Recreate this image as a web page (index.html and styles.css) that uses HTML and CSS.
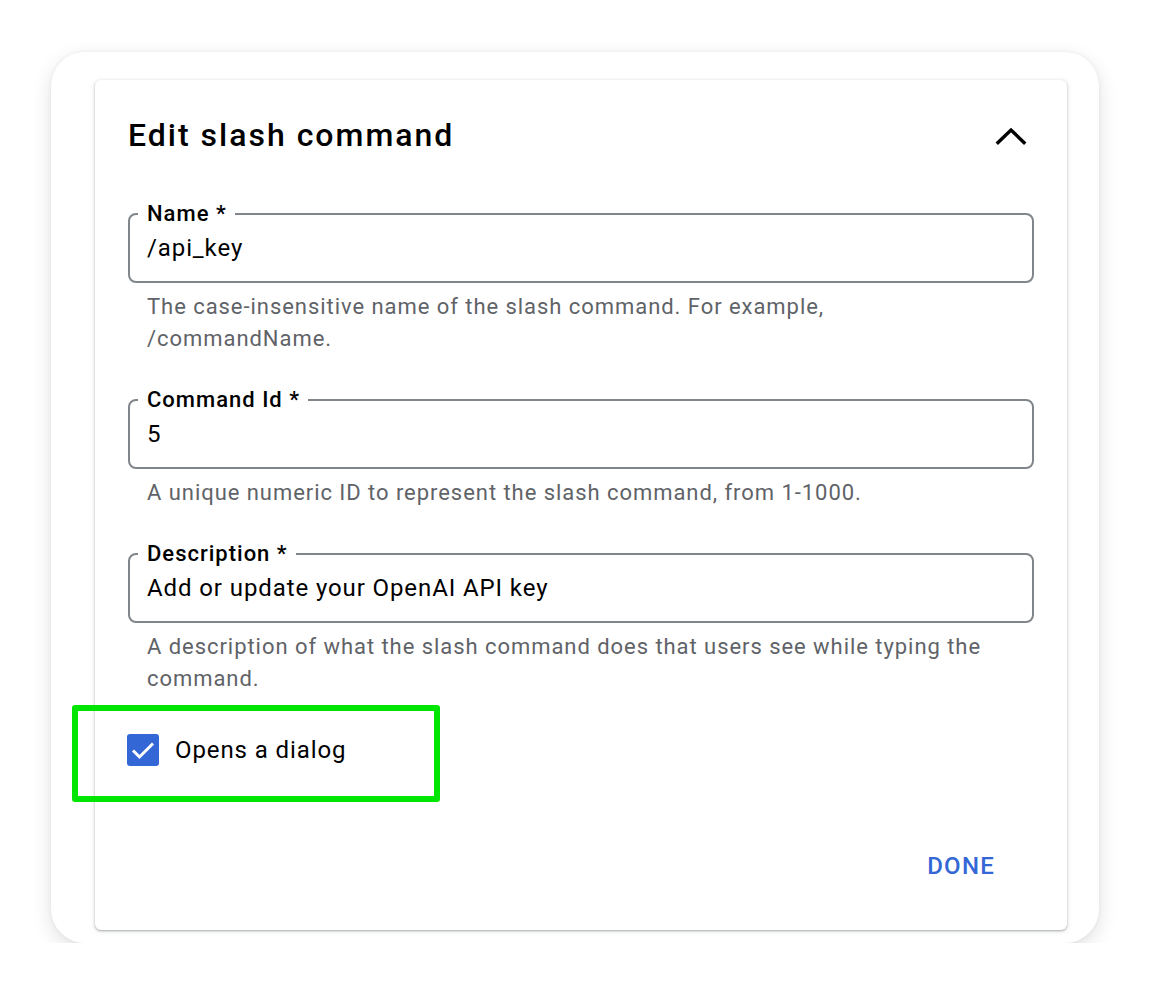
FILE: index.html
```html
<!DOCTYPE html>
<html lang="en">
<head>
<meta charset="utf-8">
<title>Edit slash command</title>
<link rel="stylesheet" href="styles.css">
</head>
<body>
<div class="frame">
  <div class="card">
    <div class="header">
      <h1 class="title">Edit slash command</h1>
      <svg class="chevron" width="32" height="20" viewBox="0 0 32 20" aria-hidden="true">
        <polyline points="3,15.5 16,3 29,15.5" fill="none" stroke="#000" stroke-width="3.4" stroke-linecap="square" stroke-linejoin="miter"/>
      </svg>
    </div>

    <div class="group group-first">
      <div class="field">
        <span class="label">Name *</span>
        <span class="value">/api_key</span>
      </div>
      <p class="helper">The case-insensitive name of the slash command. For example, /commandName.</p>
    </div>

    <div class="group">
      <div class="field">
        <span class="label">Command Id *</span>
        <span class="value">5</span>
      </div>
      <p class="helper">A unique numeric ID to represent the slash command, from 1-1000.</p>
    </div>

    <div class="group">
      <div class="field">
        <span class="label">Description *</span>
        <span class="value">Add or update your OpenAI API key</span>
      </div>
      <p class="helper">A description of what the slash command does that users see while typing the command.</p>
    </div>

    <div class="check-row">
      <span class="checkbox">
        <svg width="32" height="32" viewBox="0 0 32 32" aria-hidden="true">
          <polyline points="6,16.5 12.5,23 26,9.5" fill="none" stroke="#fff" stroke-width="3"/>
        </svg>
      </span>
      <span class="check-label">Opens a dialog</span>
      <span class="highlight"></span>
    </div>

    <div class="footer">
      <button class="done">DONE</button>
    </div>
  </div>
</div>
</body>
</html>
```

FILE: styles.css
```css
html, body {
  margin: 0;
  padding: 0;
  background: #ffffff;
}

body {
  font-family: Roboto, "Noto Sans", "Liberation Sans", sans-serif;
  color: #000;
  overflow: hidden;
}

.frame {
  margin: 52px 0 0 51px;
  width: 1048px;
  height: 891px;
  border-radius: 34px;
  background: #fff;
  box-shadow: 0 6px 20px rgba(0, 0, 0, 0.12), 0 0 4px rgba(0, 0, 0, 0.06);
  padding: 28px 0 0 44px;
  box-sizing: border-box;
}

.card {
  width: 972px;
  height: 850px;
  border-radius: 6px;
  background: #fff;
  box-shadow: 0 1px 2px rgba(60, 64, 67, 0.35), 0 1px 4px 1px rgba(60, 64, 67, 0.12);
  padding: 35px 33px 40px 33px;
  box-sizing: border-box;
  display: flex;
  flex-direction: column;
}

.header {
  display: flex;
  align-items: center;
  justify-content: space-between;
  height: 40px;
}

.title {
  margin: 0;
  font-size: 32px;
  line-height: 40px;
  font-weight: 500;
  letter-spacing: 2px;
  color: #000;
}

.chevron {
  margin-right: 7px;
  margin-top: 4px;
  display: block;
}

.group {
  margin-top: 44px;
}

.group-first {
  margin-top: 58px;
}

.field {
  position: relative;
  height: 70px;
  border: 2px solid #80868b;
  border-radius: 8px;
  box-sizing: border-box;
  display: flex;
  align-items: center;
  padding: 0 17px;
}

.label {
  position: absolute;
  left: 8px;
  top: -14px;
  padding: 0 8px 0 9px;
  background: #fff;
  font-size: 22px;
  line-height: 26px;
  font-weight: 500;
  letter-spacing: 1px;
  color: #000;
}

.value {
  font-size: 24px;
  line-height: 30px;
  letter-spacing: 0.9px;
  color: #000;
}

.helper {
  margin: 8px 0 0 0;
  padding: 0 19px;
  font-size: 22px;
  line-height: 32px;
  letter-spacing: 0.95px;
  color: #5f6368;
}

.check-row {
  position: relative;
  margin-top: 39px;
  display: flex;
  align-items: center;
  height: 32px;
}

.checkbox {
  width: 32px;
  height: 32px;
  margin-left: -1px;
  border-radius: 3px;
  background: #3367d6;
  display: block;
}

.checkbox svg {
  display: block;
}

.check-label {
  margin-left: 16px;
  font-size: 24px;
  line-height: 32px;
  letter-spacing: 0.9px;
  color: #000;
}

.highlight {
  position: absolute;
  left: -56px;
  top: -29px;
  width: 368px;
  height: 97px;
  border: 6px solid #00e600;
  border-radius: 3px;
  box-sizing: border-box;
}

.footer {
  margin-top: auto;
  display: flex;
  justify-content: flex-end;
  padding-right: 23px;
}

.done {
  border: none;
  background: none;
  padding: 0 16px;
  height: 48px;
  font-family: inherit;
  font-size: 24px;
  font-weight: 500;
  letter-spacing: 1.25px;
  color: #3367d6;
  cursor: pointer;
}
```
